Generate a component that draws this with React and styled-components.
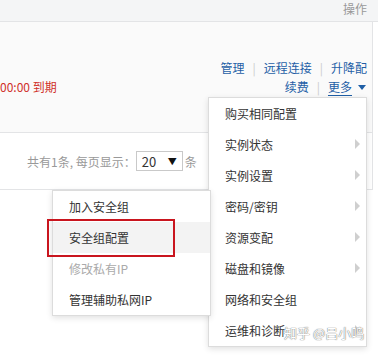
import React from 'react'
import styled, { createGlobalStyle } from 'styled-components'

const GlobalStyle = createGlobalStyle`
  body {
    margin: 0;
    background: #fff;
    font-family: "Noto Sans CJK SC", "Noto Sans", "Liberation Sans", sans-serif;
    font-size: 12px;
    color: #333;
  }
`

const moreItems = [
  { label: '购买相同配置' },
  { label: '实例状态', sub: true },
  { label: '实例设置', sub: true },
  { label: '密码/密钥', sub: true },
  { label: '资源变配', sub: true },
  { label: '磁盘和镜像', sub: true },
  { label: '网络和安全组' },
  { label: '运维和诊断', sub: true },
]

const netItems = [
  { label: '加入安全组' },
  { label: '安全组配置', active: true },
  { label: '修改私有IP', disabled: true },
  { label: '管理辅助私网IP' },
]

const App = () => {
  return (
    <>
      <GlobalStyle />
      <StyledPage>
        <TableHead>操作</TableHead>
        <Row>
          <Expire>00:00 到期</Expire>
          <Actions>
            <ActionLine>
              <Link>管理</Link>
              <Sep>|</Sep>
              <Link>远程连接</Link>
              <Sep>|</Sep>
              <Link>升降配</Link>
            </ActionLine>
            <ActionLine>
              <Link>续费</Link>
              <Sep>|</Sep>
              <Link underline>更多</Link>
              <Caret />
            </ActionLine>
          </Actions>
        </Row>
        <Pager>
          共有1条, 每页显示：
          <PageSize>
            <span>20</span>
            <span className="arrow">▼</span>
          </PageSize>
          条
        </Pager>

        <Menu left={208} top={97}>
          {moreItems.map(item => (
            <MenuItem key={item.label}>
              {item.label}
              {item.sub && <SubArrow />}
            </MenuItem>
          ))}
        </Menu>

        <Menu left={52} top={190}>
          {netItems.map(item => (
            <MenuItem key={item.label} active={item.active} disabled={item.disabled}>
              {item.label}
            </MenuItem>
          ))}
        </Menu>

        <Highlight />
        <Watermark>知乎 @吕小鸣</Watermark>
      </StyledPage>
    </>
  )
}

const StyledPage = styled.div`
  position: relative;
  width: 378px;
  height: 355px;
  overflow: hidden;
  background: #fff;
`

const TableHead = styled.div`
  box-sizing: border-box;
  height: 22px;
  padding-right: 11px;
  background: #f4f5f6;
  border-bottom: 1px solid #e3e4e6;
  text-align: right;
  line-height: 18px;
  color: #999;
`

const Row = styled.div`
  box-sizing: border-box;
  display: flex;
  justify-content: space-between;
  align-items: flex-start;
  width: 373px;
  height: 111px;
  padding: 36px 5px 0 0;
  background: #fafafa;
  border-right: 1px solid #e3e4e6;
  border-bottom: 1px solid #e3e4e6;
`

const Expire = styled.div`
  margin-top: 19px;
  line-height: 19px;
  color: #d0302a;
  white-space: nowrap;
`

const Actions = styled.div`
  display: flex;
  flex-direction: column;
  align-items: flex-end;
`

const ActionLine = styled.div`
  display: flex;
  align-items: center;
  height: 19px;
`

const Link = styled.span`
  color: #1f5fa6;
  cursor: pointer;
  text-decoration: ${p => (p.underline ? 'underline' : 'none')};
  text-underline-offset: 3px;
`

const Sep = styled.span`
  margin: 0 8px;
  color: #ccc;
`

const Caret = styled.span`
  margin: 2px 1px 0 6px;
  border-top: 5px solid #1f5fa6;
  border-left: 4px solid transparent;
  border-right: 4px solid transparent;
`

const Pager = styled.div`
  box-sizing: border-box;
  display: flex;
  align-items: center;
  width: 373px;
  height: 57px;
  padding: 0 0 0 27px;
  border-right: 1px solid #e3e4e6;
  border-bottom: 1px solid #e3e4e6;
  color: #999;
`

const PageSize = styled.div`
  box-sizing: border-box;
  display: flex;
  justify-content: space-between;
  align-items: center;
  width: 47px;
  height: 20px;
  margin: 0 2px 0 0;
  padding: 0 5px;
  border: 1px solid #c9c9c9;
  background: #fff;
  color: #333;
  font-size: 13px;

  & .arrow {
    font-size: 9px;
    color: #111;
  }
`

const Menu = styled.ul`
  position: absolute;
  left: ${p => p.left}px;
  top: ${p => p.top}px;
  box-sizing: border-box;
  width: 159px;
  margin: 0;
  padding: 0;
  list-style: none;
  background: #fff;
  border: 1px solid #dcdcdc;
  box-shadow: 0 2px 6px rgba(0, 0, 0, 0.12);
`

const MenuItem = styled.li`
  position: relative;
  display: flex;
  align-items: center;
  height: 31px;
  padding: 0 16px;
  color: ${p => (p.disabled ? '#aaa' : '#333')};
  background: ${p => (p.active ? '#f3f3f3' : 'transparent')};
  white-space: nowrap;
`

const SubArrow = styled.span`
  position: absolute;
  right: 6px;
  top: 10px;
  border-left: 5px solid #cfcfcf;
  border-top: 5px solid transparent;
  border-bottom: 5px solid transparent;
`

const Highlight = styled.div`
  position: absolute;
  left: 47px;
  top: 219px;
  width: 124px;
  height: 34px;
  border: 2px solid #c9151e;
`

const Watermark = styled.div`
  position: absolute;
  left: 284px;
  top: 323px;
  font-size: 13px;
  line-height: 20px;
  color: #fff;
  white-space: nowrap;
  text-shadow: 0 0 1px #777, 0 0 1px #777;
`

export default App
